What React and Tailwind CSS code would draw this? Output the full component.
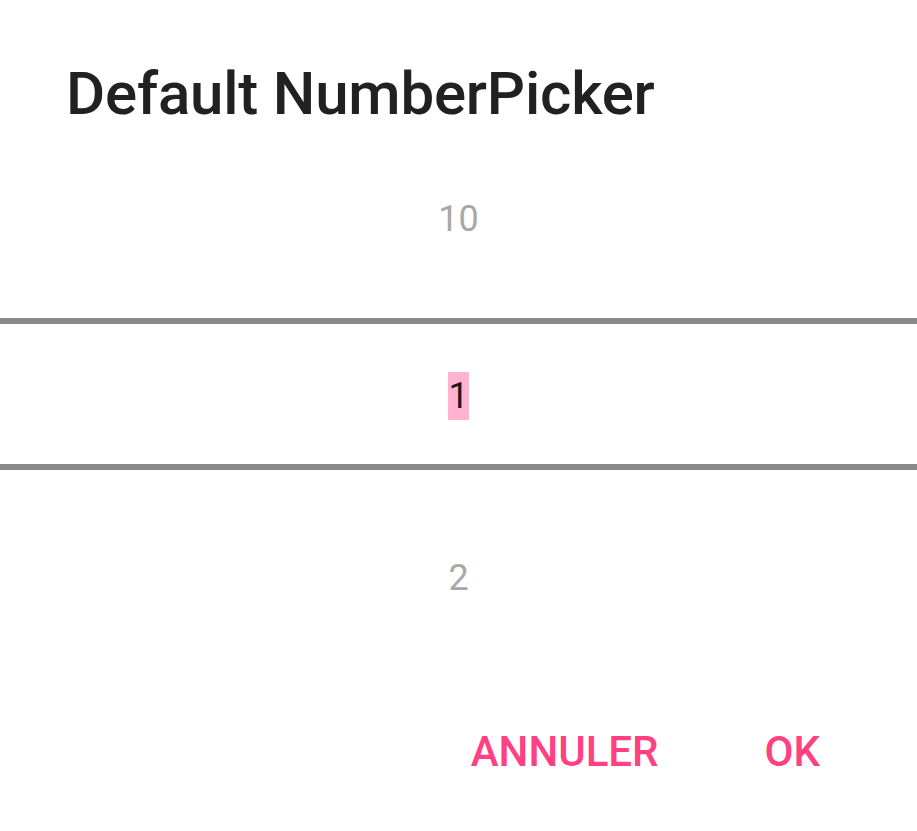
export default function App() {
    return (
        <div className="w-[917px] h-[831px] bg-white flex flex-col font-['Roboto',sans-serif] overflow-hidden">
            {/* Titre */}
            <div className="h-[130px] pt-[64px] pl-[66px]">
                <h1 className="text-[60px] leading-[60px] font-medium text-[#212121] tracking-[-0.2px]">
                    Default NumberPicker
                </h1>
            </div>

            {/* Picker */}
            <div className="h-[180px] pt-[6px] flex items-center justify-center text-[36px] leading-none text-[#a8a8a8]">
                10
            </div>
            <div className="mt-[14px] border-y-[6px] border-[#8a8a8a] h-[156px] pt-[5px] flex items-center justify-center">
                <span className="bg-[#ffb3d1] text-[#1a1a1a] text-[36px] leading-[48px]">1</span>
            </div>
            <div className="mt-[20px] h-[180px] flex items-center justify-center text-[36px] leading-none text-[#a8a8a8]">
                2
            </div>

            {/* Boutons */}
            <div className="h-[170px] pt-[8px] flex items-center justify-end pr-[97px] gap-[106px] text-[42px] leading-none font-medium text-[#ff4081]">
                <button className="font-medium">ANNULER</button>
                <button className="font-medium">OK</button>
            </div>
        </div>
    );
}
